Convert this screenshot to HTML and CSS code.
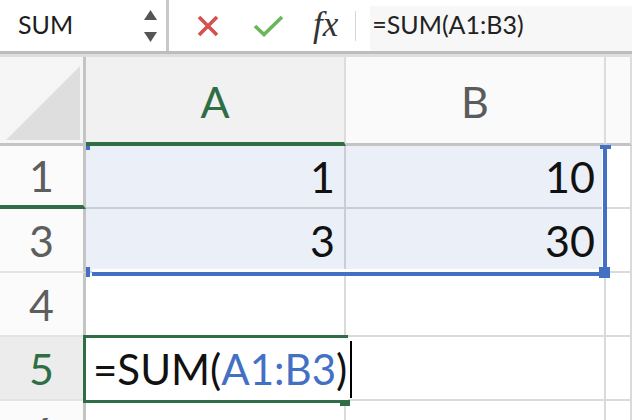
FILE: index.html
```html
<!DOCTYPE html>
<html lang="en">
<head>
    <meta charset="UTF-8">
    <meta name="viewport" content="width=device-width, initial-scale=1.0">
    <title>Book1 - SUM</title>
    <link rel="stylesheet" href="styles.css">
</head>
<body>
    <!-- Formula bar -->
    <div class="toolbar">
        <div class="name-box">
            <span class="name-text">SUM</span>
            <div class="spinner">
                <svg width="13" height="10" viewBox="0 0 13 10"><polygon points="6.5,0 13,10 0,10" fill="#555"/></svg>
                <svg width="13" height="10" viewBox="0 0 13 10"><polygon points="0,0 13,0 6.5,10" fill="#555"/></svg>
            </div>
        </div>
        <div class="bar-actions">
            <svg class="icon-cancel" width="22" height="22" viewBox="0 0 22 22">
                <path d="M2 2 L20 20 M20 2 L2 20" stroke="#d4514e" stroke-width="3.6" stroke-linecap="butt"/>
            </svg>
            <svg class="icon-enter" width="29" height="22" viewBox="0 0 29 22">
                <path d="M1 11 L10 19.5 L28 2" stroke="#69b65b" stroke-width="3.6" fill="none"/>
            </svg>
            <span class="fx">fx</span>
        </div>
        <div class="bar-divider"></div>
        <div class="formula-input">=SUM(A1:B3)</div>
    </div>
    <div class="toolbar-edge"></div>

    <!-- Sheet grid -->
    <div class="sheet">
        <div class="corner"><div class="corner-mark"></div></div>
        <div class="col-head active">A</div>
        <div class="col-head">B</div>
        <div class="col-head"></div>

        <div class="row-head hidden-below">1</div>
        <div class="cell in-range">1</div>
        <div class="cell in-range">10</div>
        <div class="cell"></div>

        <div class="row-head">3</div>
        <div class="cell in-range">3</div>
        <div class="cell in-range">30</div>
        <div class="cell"></div>

        <div class="row-head">4</div>
        <div class="cell"></div>
        <div class="cell"></div>
        <div class="cell"></div>

        <div class="row-head active">5</div>
        <div class="cell"></div>
        <div class="cell"></div>
        <div class="cell"></div>

        <div class="row-head">6</div>
        <div class="cell"></div>
        <div class="cell"></div>
        <div class="cell"></div>

        <!-- referenced range A1:B3 -->
        <div class="range-box"></div>
        <span class="range-dot dot-tl"></span>
        <span class="range-dot dot-tr"></span>
        <span class="range-dot dot-bl"></span>
        <span class="range-dot dot-br"></span>

        <!-- cell being edited -->
        <div class="edit-cell">
            <span>=SUM(</span><span class="ref">A1:B3</span><span>)</span><span class="caret"></span>
        </div>
        <span class="fill-handle"></span>
    </div>
</body>
</html>
```

FILE: styles.css
```css
:root {
    --grid-line: #dadada;
    --head-line: #c4c4c4;
    --excel-green: #2f6e45;
    --ref-blue: #4470c4;
    --range-fill: #eaeff8;
}

body {
    margin: 0;
    width: 632px;
    height: 420px;
    overflow: hidden;
    background: #fff;
    font-family: 'Lato', 'Open Sans', sans-serif;
    color: #111;
}

/* ---------- formula bar ---------- */

.toolbar {
    display: flex;
    align-items: center;
    height: 51px;
    border-bottom: 3px solid #bdbdbd;
    background: #fff;
}

.toolbar-edge {
    height: 3px;
    background: #dedede;
}

.name-box {
    display: flex;
    align-items: center;
    box-sizing: border-box;
    width: 169px;
    height: 100%;
    padding: 0 9px 0 18px;
    border-right: 3px solid #c8c8c8;
}

.name-text {
    font-size: 25px;
    color: #1d1d1d;
    padding-bottom: 3px;
}

.spinner {
    margin-left: auto;
    display: flex;
    flex-direction: column;
    gap: 12px;
    padding-top: 1px;
}

.spinner svg {
    display: block;
}

.bar-actions {
    display: flex;
    align-items: center;
    height: 100%;
    padding-left: 28px;
}

.icon-enter {
    margin-left: 35px;
    margin-top: 1px;
}

.fx {
    margin-left: 30px;
    font-family: 'Liberation Serif', 'DejaVu Serif', serif;
    font-style: italic;
    font-size: 35px;
    color: #333;
    line-height: 1;
    margin-top: -3px;
}

.bar-divider {
    width: 1px;
    height: 30px;
    margin-left: 17px;
    background: #d6d6d6;
}

.formula-input {
    flex: 1;
    align-self: stretch;
    display: flex;
    align-items: center;
    margin: 6px 0 0 14px;
    padding-left: 2px;
    padding-bottom: 9px;
    background: #f7f7f7;
    font-size: 25px;
    color: #222;
}

/* ---------- sheet ---------- */

.sheet {
    position: relative;
    display: grid;
    grid-template-columns: 86px 260px 260px 1fr;
    grid-template-rows: 89px 63px 64px 64px 64px 64px;
    font-size: 43px;
}

.sheet > div {
    box-sizing: border-box;
}

.corner {
    position: relative;
    background: #f6f6f6;
    border-right: 3px solid var(--head-line);
    border-bottom: 3px solid var(--head-line);
}

.corner-mark {
    position: absolute;
    left: 6px;
    top: 9px;
    width: 74px;
    height: 74px;
    background: #dedede;
    clip-path: polygon(100% 0, 100% 100%, 0 100%);
}

.col-head {
    display: flex;
    align-items: center;
    justify-content: center;
    padding-top: 3px;
    background: #fafafa;
    color: #5b5b5b;
    border-right: 2px solid #dcdcdc;
    border-bottom: 3px solid var(--head-line);
}

.col-head.active {
    background: #f1f1f1;
    color: var(--excel-green);
    border-bottom: 4px solid var(--excel-green);
}

.row-head {
    display: flex;
    align-items: center;
    justify-content: center;
    background: #fbfbfb;
    color: #5e5e5e;
    border-right: 3px solid var(--head-line);
    border-bottom: 2px solid #e4e4e4;
}

.row-head.hidden-below {
    border-bottom: 4px solid var(--excel-green);
}

.row-head.active {
    background: #ececec;
    color: var(--excel-green);
}

.cell {
    display: flex;
    align-items: center;
    justify-content: flex-end;
    padding-right: 9px;
    border-right: 2px solid var(--grid-line);
    border-bottom: 2px solid var(--grid-line);
    color: #111;
}

.cell.in-range {
    background: var(--range-fill);
    border-color: #c9cdd6;
}

/* range highlight while editing the formula */
.range-box {
    position: absolute;
    left: 92px;
    top: 89px;
    width: 515px;
    height: 130px;
    border-right: 4px solid var(--ref-blue);
    border-bottom: 4px solid var(--ref-blue);
    box-shadow: inset -1px -3px 0 #fff;
}

.range-dot {
    position: absolute;
    background: var(--ref-blue);
}

.dot-tl { left: 86px; top: 89px; width: 4px; height: 4px; }
.dot-tr { left: 600px; top: 88px; width: 11px; height: 4px; }
.dot-bl { left: 86px; top: 210px; width: 4px; height: 10px; }
.dot-br { left: 599px; top: 210px; width: 11px; height: 11px; }

.edit-cell {
    position: absolute;
    left: 83px;
    top: 278px;
    width: 265px;
    height: 68px;
    box-sizing: border-box;
    display: flex;
    align-items: center;
    padding-left: 7px;
    border: 3px solid var(--excel-green);
    border-right: none;
    background: #fff;
    white-space: nowrap;
    font-size: 42px;
}

.edit-cell span {
    flex-shrink: 0;
}

.edit-cell .ref {
    color: var(--ref-blue);
}

.caret {
    display: inline-block;
    width: 2px;
    height: 57px;
    margin-left: 3px;
    background: #000;
}

.fill-handle {
    position: absolute;
    left: 340px;
    top: 343px;
    width: 10px;
    height: 6px;
    background: var(--excel-green);
}
```
